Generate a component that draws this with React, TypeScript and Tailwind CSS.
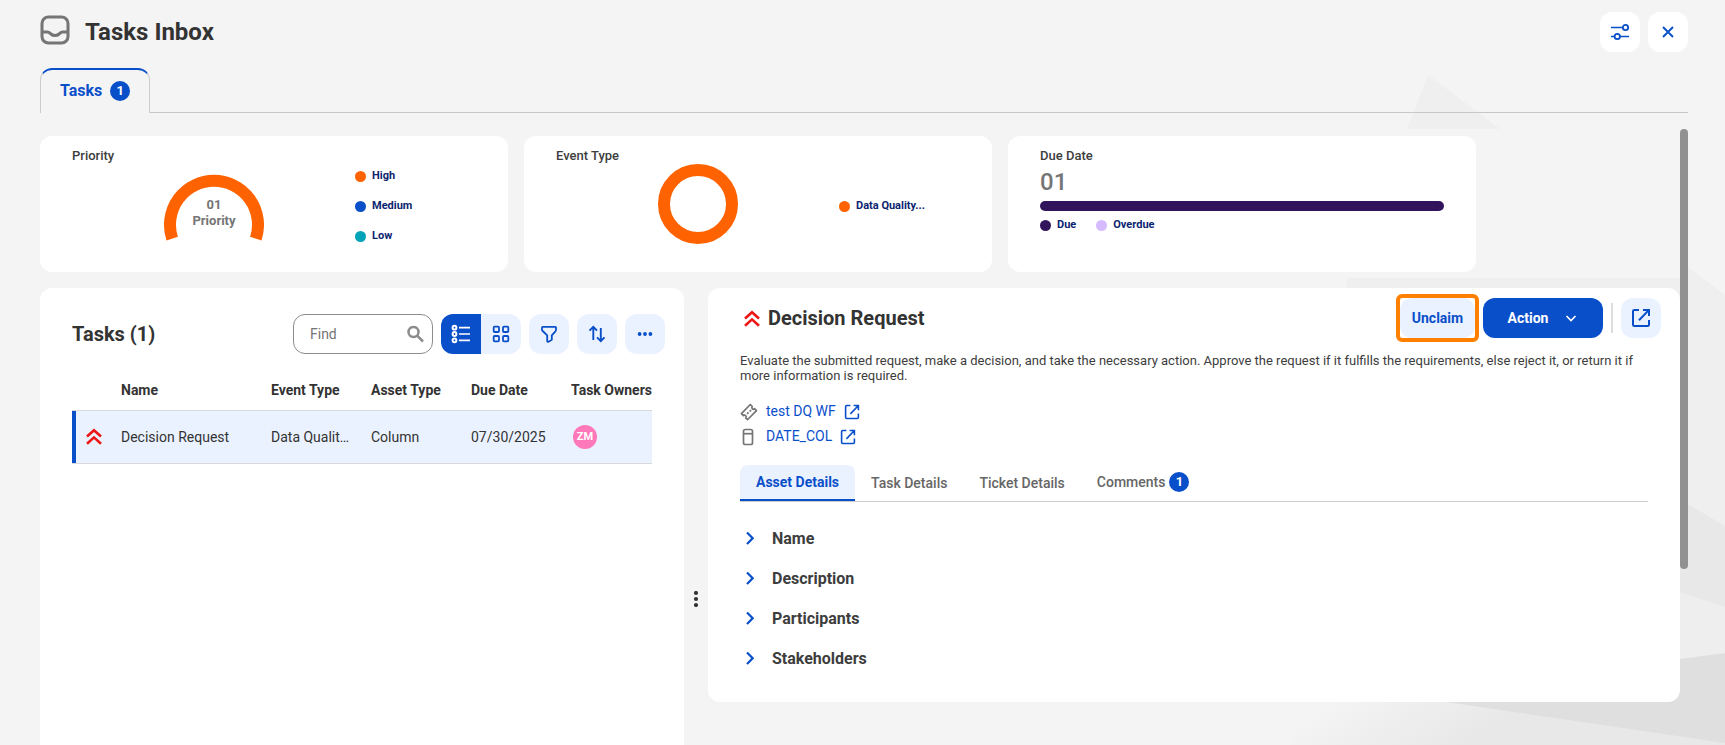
import React from 'react';

type IconProps = { className?: string };

const InboxIcon: React.FC<IconProps> = ({ className }) => (
  <svg className={className} width="30" height="30" viewBox="0 0 30 30" fill="none" stroke="currentColor" strokeWidth="3">
    <rect x="2" y="2" width="26" height="26" rx="6.5" />
    <path d="M2 17h5.5c1.6 0 2.2 1 3.3 2 1.2 1 2.6 1.5 4.2 1.500s3-.5 4.200-1.500c1.100-1 1.700-2 3.300-2H28" />
  </svg>
);

const SlidersIcon: React.FC = () => (
  <svg width="20" height="20" viewBox="0 0 20 20" fill="none" stroke="currentColor" strokeWidth="1.5">
    <path d="M1 5.5h11.5M1 14.5h3.5M10 14.5h9" />
    <circle cx="15.5" cy="5.5" r="2.7" strokeWidth="1.8" />
    <circle cx="7.3" cy="14.5" r="2.7" strokeWidth="1.8" />
  </svg>
);

const CloseIcon: React.FC = () => (
  <svg width="12" height="12" viewBox="0 0 12 12" fill="none" stroke="currentColor" strokeWidth="1.9">
    <path d="M1 1l10 10M11 1L1 11" />
  </svg>
);

const SearchIcon: React.FC = () => (
  <svg width="18" height="18" viewBox="0 0 18 18" fill="none" stroke="currentColor" strokeWidth="2.5">
    <circle cx="7.5" cy="7" r="5" />
    <path d="M11.2 10.7l5.8 5.8" />
  </svg>
);

const ListIcon: React.FC = () => (
  <svg width="20" height="20" viewBox="0 0 20 20" fill="none" stroke="currentColor" strokeWidth="2">
    <circle cx="3.5" cy="3.7" r="1.9" />
    <circle cx="3.5" cy="10" r="1.9" />
    <circle cx="3.5" cy="16.3" r="1.9" />
    <path d="M8 3.7h11M8 10h11M8 16.3h11" strokeWidth="1.7" />
  </svg>
);

const GridIcon: React.FC = () => (
  <svg width="18" height="18" viewBox="0 0 18 18" fill="none" stroke="currentColor" strokeWidth="1.8">
    <rect x="1.7" y="1.7" width="5.3" height="5.3" rx="1" />
    <rect x="11" y="1.7" width="5.3" height="5.3" rx="1" />
    <rect x="1.7" y="11" width="5.3" height="5.3" rx="1" />
    <rect x="11" y="11" width="5.3" height="5.3" rx="1" />
  </svg>
);

const FilterIcon: React.FC = () => (
  <svg width="18" height="18" viewBox="0 0 18 18" fill="none" stroke="currentColor" strokeWidth="1.8" strokeLinejoin="round">
    <path d="M2.700 1.800h12.600c.5 0 .7.3.7.7v2.300c0 .6-.2 1-.6 1.500l-3.600 4v4.500L8.500 16.700c-.6.4-1.300 0-1.300-.6v-5.800l-4.500-4.300C2.200 5.500 2 5.200 2 4.700V2.500c0-.4.3-.7.700-.7z" />
  </svg>
);

const SortIcon: React.FC = () => (
  <svg width="18" height="18" viewBox="0 0 18 18" fill="none" stroke="currentColor" strokeWidth="1.9">
    <path d="M5.300 15V2M1.500 5.700l3.800-3.900 3.700 3.900M12.800 3v13M9 12.300l3.800 3.900 3.700-3.900" />
  </svg>
);

const DotsIcon: React.FC = () => (
  <svg width="16" height="16" viewBox="0 0 16 16" fill="currentColor">
    <circle cx="2.6" cy="8" r="1.9" />
    <circle cx="8" cy="8" r="1.9" />
    <circle cx="13.400" cy="8" r="1.9" />
  </svg>
);

const HighPriorityIcon: React.FC = () => (
  <svg width="16" height="17" viewBox="0 0 16 17" fill="none" stroke="#ee1515" strokeWidth="2.6">
    <path d="M1 8.500l7-6.300 7 6.300M1 15.700l7-6.300 7 6.300" />
  </svg>
);

const OpenIcon: React.FC<{ size: number }> = ({ size }) => (
  <svg width={size} height={size} viewBox="0 0 20 20" fill="none" stroke="currentColor" strokeWidth="2">
    <path d="M8 1.900H3.400C2.600 1.900 2 2.500 2 3.300v13.400c0 .8.600 1.400 1.400 1.400h13.200c.8 0 1.400-.6 1.400-1.400V12M12 1.900h6v6M18 1.900L8 12.300" />
  </svg>
);

const TicketIcon: React.FC = () => (
  <svg width="18" height="18" viewBox="0 0 18 18" fill="none" stroke="#757575" strokeWidth="1.7" strokeLinejoin="round">
    <path d="M10.300 1.500l2 2a1.500 1.500 0 0 0 2.200 2.200l2 2-8.800 8.800-2-1.500a1.500 1.500 0 0 0-2.300-2.300l-2-2z" />
    <path d="M7 10.800l4.500-4" strokeDasharray="2 1.500" />
  </svg>
);

const ColumnIcon: React.FC = () => (
  <svg width="18" height="18" viewBox="0 0 18 18" fill="none" stroke="#757575" strokeWidth="1.7">
    <rect x="3.500" y="1.500" width="9" height="15" rx="1.800" />
    <path d="M4 5.700h8" />
  </svg>
);

const legend = [
  { label: 'High', dot: 'bg-[#ff6200]' },
  { label: 'Medium', dot: 'bg-[#0a4fca]' },
  { label: 'Low', dot: 'bg-[#00a3b8]' },
];

const LegendItem: React.FC<{ label: string; dot: string }> = ({ label, dot }) => (
  <li className="flex items-center gap-1.5 text-[11px] leading-4 font-bold text-[#0b2470]">
    <span className={`size-[11px] rounded-full ${dot}`} />
    {label}
  </li>
);

const StatCard: React.FC<{ title: string; children: React.ReactNode }> = ({ title, children }) => (
  <section className="h-[136px] max-w-[468px] flex-1 rounded-xl bg-white px-8 pt-3">
    <h2 className="text-[13px] leading-4 font-medium text-[#3d3d3d]">{title}</h2>
    {children}
  </section>
);

const Count: React.FC<{ children: React.ReactNode }> = ({ children }) => (
  <span className="flex size-5 items-center justify-center rounded-full bg-[#0a4fca] text-[13px] leading-4 font-bold text-white">
    {children}
  </span>
);

const Backdrop: React.FC = () => (
  <svg className="absolute inset-0 h-full w-full" viewBox="0 0 1725 745" preserveAspectRatio="xMaxYMax slice" aria-hidden="true">
    <defs>
      <linearGradient id="floor" gradientUnits="userSpaceOnUse" x1="1350" y1="690" x2="1405" y2="780">
        <stop offset="0" stopColor="#f4f4f4" />
        <stop offset="1" stopColor="#e8e8e8" />
      </linearGradient>
    </defs>
    <path d="M1428 75l72 54h-93z" fill="#efefef" />
    <path d="M1347 278h341v-11l37 28v240H1340z" fill="#efefef" />
    <path d="M1640 476l85 50v90h-85z" fill="#e8e8e8" />
    <path d="M1640 579l85 28v60h-85z" fill="#eeeeee" />
    <path d="M1290 745l20-45h415v45z" fill="url(#floor)" />
    <path d="M1440 701l240-42 45-6v90z" fill="#dfdfdf" />
  </svg>
);

const toolButton = 'flex size-10 items-center justify-center rounded-xl bg-[#ebf2ff]';

const TasksPanel: React.FC = () => (
  <section className="rounded-t-xl bg-white pt-[26px] pl-8">
    <div className="flex items-center justify-between pr-[19px]">
      <h2 className="text-xl leading-6 font-bold">Tasks (1)</h2>
      <div className="flex gap-2 text-[#0a4fca]">
        <label className="flex h-10 w-[140px] items-center rounded-xl border border-[#8c8c8c] pr-2 pl-4 text-[#8c8c8c]">
          <input
            type="text"
            aria-label="Find"
            placeholder="Find"
            className="w-full min-w-0 flex-1 text-sm text-[#3d3d3d] outline-none placeholder:text-[#757575]"
          />
          <SearchIcon />
        </label>
        <div className="flex overflow-hidden rounded-xl">
          <button aria-label="List view" className="flex size-10 items-center justify-center bg-[#0a4fca] text-white">
            <ListIcon />
          </button>
          <button aria-label="Grid view" className="flex size-10 items-center justify-center bg-[#ebf2ff]">
            <GridIcon />
          </button>
        </div>
        <button aria-label="Filter" className={toolButton}>
          <FilterIcon />
        </button>
        <button aria-label="Sort" className={toolButton}>
          <SortIcon />
        </button>
        <button aria-label="More" className={toolButton}>
          <DotsIcon />
        </button>
      </div>
    </div>

    <div className="mt-4 mr-8">
      <table className="w-full table-fixed text-left text-sm">
        <thead>
          <tr className="h-10 border-b border-[#d9d9d9] whitespace-nowrap">
            <th className="w-[49px]" aria-label="Priority" />
            <th className="w-[150px] font-bold">Name</th>
            <th className="w-[100px] font-bold">Event Type</th>
            <th className="w-[100px] font-bold">Asset Type</th>
            <th className="w-[100px] font-bold">Due Date</th>
            <th className="font-bold">Task Owners</th>
          </tr>
        </thead>
        <tbody>
          <tr className="h-[53px] border-b border-[#d9d9d9] bg-[#ebf2ff]">
            <td className="pl-3.5 shadow-[inset_4px_0_0_#0a4fca]">
              <HighPriorityIcon />
            </td>
            <td>Decision Request</td>
            <td>Data Qualit…</td>
            <td>Column</td>
            <td>07/30/2025</td>
            <td>
              <span className="ml-0.5 flex size-6 items-center justify-center rounded-full bg-[#ff78b9] text-[11px] font-bold text-white">
                ZM
              </span>
            </td>
          </tr>
        </tbody>
      </table>
    </div>
  </section>
);

const DetailsPanel: React.FC = () => (
  <section className="self-start rounded-xl bg-white pt-1.5 pb-[23px] pl-8">
    <div className="flex items-center justify-between pr-[19px]">
      <div className="flex items-center gap-2 pl-1">
        <HighPriorityIcon />
        <h2 className="text-xl leading-6 font-bold">Decision Request</h2>
      </div>
      <div className="flex items-center">
        <span className="mr-1 rounded-md border-4 border-[#ff8000]">
          <button className="h-10 w-[75px] rounded-xl bg-[#ebf2ff] text-sm font-bold text-[#0a4fca]">Unclaim</button>
        </span>
        <button className="flex h-10 w-[120px] items-center justify-center gap-4 rounded-xl bg-[#0a4fca] text-sm font-bold text-white">
          Action
          <svg width="14" height="14" viewBox="0 0 14 14" fill="none" stroke="currentColor" strokeWidth="1.600">
            <path d="M2.500 5L7 9.500 11.500 5" />
          </svg>
        </button>
        <span className="mx-2 h-[30px] w-0.5 bg-[#dddddd]" />
        <button aria-label="Open request" className={`${toolButton} text-[#0a4fca]`}>
          <OpenIcon size={20} />
        </button>
      </div>
    </div>

    <div className="pr-8">
      <p className="mt-[11px] text-[13px] leading-[15px] text-[#3d3d3d]">
        Evaluate the submitted request, make a decision, and take the necessary action. Approve the request if it
        fulfills the requirements, else reject it, or return it if more information is required.
      </p>

      <ul className="mt-4 text-sm leading-[25px] text-[#0a4fca]">
        <li className="flex items-center">
          <TicketIcon />
          <a href="#ticket" className="ml-2 flex items-center gap-2">
            test DQ WF
            <OpenIcon size={16} />
          </a>
        </li>
        <li className="flex items-center">
          <ColumnIcon />
          <a href="#column" className="ml-2 flex items-center gap-2">
            DATE_COL
            <OpenIcon size={16} />
          </a>
        </li>
      </ul>

      <nav className="mt-4 flex h-[37px] border-b border-[#cccccc] text-sm font-medium text-[#666666]">
        <button className="rounded-t-lg border-b-2 border-[#0a4fca] bg-[#ebf2ff] px-4 font-bold text-[#0a4fca]">
          Asset Details
        </button>
        <button className="px-4">Task Details</button>
        <button className="px-4">Ticket Details</button>
        <button className="flex items-center gap-1 px-4 pb-0.5">
          Comments
          <Count>1</Count>
        </button>
      </nav>

      <div className="mt-[17px]">
        {['Name', 'Description', 'Participants', 'Stakeholders'].map((label) => (
          <button key={label} className="flex h-10 w-full items-center gap-3 pl-1 text-base font-bold text-[#3d3d3d]">
            <svg width="16" height="16" viewBox="0 0 16 16" fill="none" stroke="#0a4fca" strokeWidth="2.2">
              <path d="M3 1.500L8.700 7.200 3 13" />
            </svg>
            {label}
          </button>
        ))}
      </div>
    </div>
  </section>
);

const App: React.FC = () => {
  return (
    <div className="relative flex h-screen flex-col overflow-hidden bg-[#f4f4f4] font-[Roboto,sans-serif] text-[#333333]">
      <Backdrop />

      {/* Header */}
      <header className="relative flex items-center justify-between px-10 pt-3 pr-[37px]">
        <div className="flex items-center gap-[15px]">
          <InboxIcon className="-mt-1 text-[#757575]" />
          <h1 className="text-2xl font-bold">Tasks Inbox</h1>
        </div>
        <div className="flex gap-2 text-[#0a4fca]">
          <button aria-label="Settings" className="flex size-10 items-center justify-center rounded-xl bg-white">
            <SlidersIcon />
          </button>
          <button aria-label="Close" className="flex size-10 items-center justify-center rounded-xl bg-white">
            <CloseIcon />
          </button>
        </div>
      </header>

      {/* Tabs */}
      <nav className="relative mt-4 mr-[37px] ml-10 flex">
        <button className="flex h-[45px] items-center gap-2 rounded-t-xl border-x border-t-2 border-x-[#cccccc] border-t-[#0a4fca] px-[19px] pb-0.5 text-base font-bold text-[#0a4fca]">
          Tasks
          <Count>1</Count>
        </button>
        <div className="flex-1 border-b border-[#c8c8c8]" />
      </nav>

      {/* Scrolling area */}
      <main className="relative mt-4 mr-[37px] flex min-h-0 flex-1 pl-10">
        <div className="flex-1 overflow-hidden pt-[7px]">
          <div className="mb-4 flex gap-4">
            <StatCard title="Priority">
              <div className="flex h-[84px] items-center">
                <div className="flex w-[283px] justify-center">
                  <svg width="100" height="84" viewBox="0 0 100 84">
                    <path
                      d="M8.200 74.600A44 44 0 1 1 91.800 74.600"
                      fill="none"
                      stroke="#ff6200"
                      strokeWidth="12"
                    />
                    <g fill="#757575" fontSize="13" fontWeight="700" textAnchor="middle">
                      <text x="50" y="45">01</text>
                      <text x="50" y="61">Priority</text>
                    </g>
                  </svg>
                </div>
                <ul className="flex flex-col gap-3.5">
                  {legend.map((item) => (
                    <LegendItem key={item.label} {...item} />
                  ))}
                </ul>
              </div>
            </StatCard>

            <StatCard title="Event Type">
              <div className="flex h-[84px] items-center">
                <div className="flex w-[283px] justify-center self-start">
                  <svg width="80" height="80" viewBox="0 0 80 80">
                    <circle cx="40" cy="40" r="34" fill="none" stroke="#ff6200" strokeWidth="12" />
                  </svg>
                </div>
                <ul>
                  <LegendItem label="Data Quality..." dot="bg-[#ff6200]" />
                </ul>
              </div>
            </StatCard>

            <StatCard title="Due Date">
              <p className="text-2xl leading-[37px] font-medium text-[#757575]">01</p>
              <div className="h-2.5 rounded-full bg-[#32145c]" />
              <ul className="mt-1.5 flex gap-5">
                <LegendItem label="Due" dot="bg-[#32145c]" />
                <LegendItem label="Overdue" dot="bg-[#d6baff]" />
              </ul>
            </StatCard>
          </div>

          <div className="grid min-h-[622px] grid-cols-[161fr_24px_243fr]">
            <TasksPanel />
            <div className="flex items-center justify-center">
              <svg width="6" height="16" viewBox="0 0 6 16" fill="#333333">
                <circle cx="3" cy="2" r="2.1" />
                <circle cx="3" cy="8" r="2.1" />
                <circle cx="3" cy="14" r="2.1" />
              </svg>
            </div>
            <DetailsPanel />
          </div>
        </div>
        <div className="h-5/7 w-2 rounded-full bg-[#919191]" />
      </main>
    </div>
  );
};

export default App;
